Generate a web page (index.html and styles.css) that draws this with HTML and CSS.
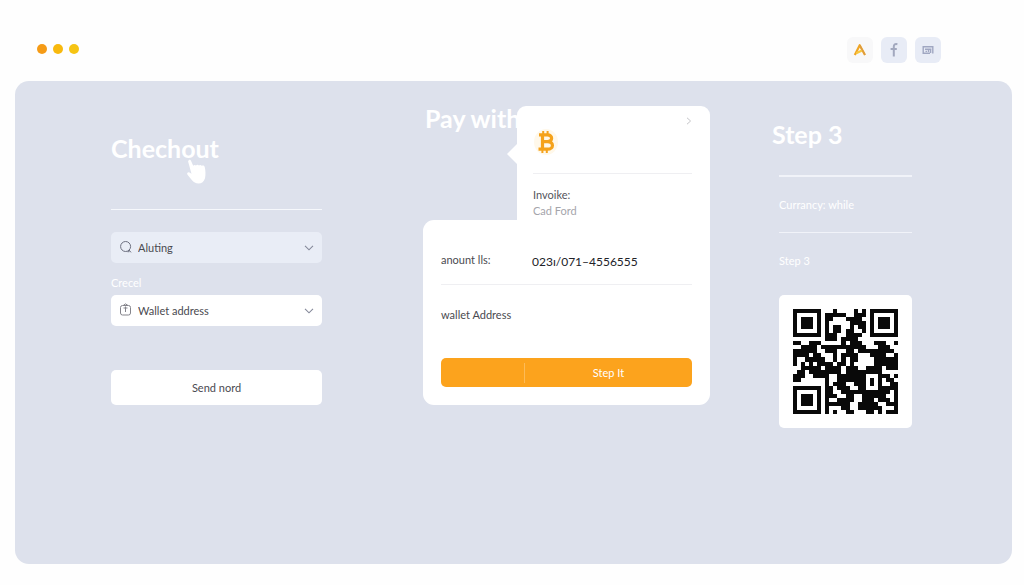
FILE: index.html
```html
<!DOCTYPE html>
<html lang="en">
<head>
<meta charset="utf-8">
<meta name="viewport" content="width=device-width, initial-scale=1">
<title>Checkout</title>
<link rel="stylesheet" href="styles.css">
</head>
<body>
<header class="topbar">
  <div class="dots" aria-hidden="true">
    <span class="dot dot-orange"></span><span class="dot dot-amber"></span><span class="dot dot-yellow"></span>
  </div>
  <nav class="tools">
    <button class="tool tool-light" type="button" aria-label="Brand">
      <svg width="14" height="14" viewBox="0 0 14 14" fill="none" stroke-linejoin="round"><path d="M1.8 12 6.7 2.2 12 12" stroke="#f0a524" stroke-width="2.2"/><path d="M3.2 10.2 9 7.5" stroke="#f7c63c" stroke-width="2.2"/><path d="M7 2.5 12 12" stroke="#d99a45" stroke-width="1.2"/></svg>
    </button>
    <button class="tool" type="button" aria-label="Facebook">
      <svg width="14" height="16" viewBox="0 0 14 16" fill="none" stroke="#a2a8be" stroke-width="2"><path d="M10.4 2.2C7.8 1.6 6.8 2.8 6.8 4.8V14.6M3.6 7H9.8"/></svg>
    </button>
    <button class="tool" type="button" aria-label="Cards">
      <svg width="12" height="10" viewBox="0 0 12 10" fill="none" stroke="#a0a7c2" stroke-width="1.4"><path d="M.5 1.8H11.5M1.2 1.5V8.2H8M10.8 1.5V8.5M3 4.2H9.4M3.5 6.4H5M6.5 4.5V7M8.6 4.5V8"/></svg>
    </button>
  </nav>
</header>
<main class="panel">
  <form class="checkout">
    <div class="checkout-head">
      <h1 class="title">Chechout</h1>
      <svg class="hand" width="22" height="26" viewBox="0 0 22 26" fill="#fff"><path d="M2.8 1.2C3.6.5 4.7.9 5.1 1.9L7.2 6.8C7.8 5.8 9.2 5.6 10 6.5 10.8 5.5 12.3 5.6 12.9 6.5 13.7 5.6 15.2 5.8 15.7 6.8 17.2 6 18.5 6.6 18.8 8.2 19.5 11.5 19.8 15.5 19 19.2 18 22.8 15.6 24.6 12.6 24.6 9.6 24.6 7.6 23.2 5.8 21L1.5 15.7C.6 14.4 1.5 13 3 13.2L5.5 14.8 2.3 3.2C2 2.3 2.1 1.7 2.8 1.2Z"/></svg>
    </div>
    <div class="field field-tint">
      <svg class="field-icon" width="14" height="14" viewBox="0 0 14 14" fill="none" stroke="#6d7080" stroke-width="1"><circle cx="6.6" cy="6.5" r="5"/><path d="M8.5 11.7H10.4M10 10 12 12.4"/></svg>
      <select class="select" aria-label="Method"><option>Aluting</option></select>
      <svg class="chevron" width="10" height="6" viewBox="0 0 10 6" fill="none" stroke="#85899a" stroke-width="1.1"><path d="M1 .8 5 4.8 9 .8"/></svg>
    </div>
    <label class="label" for="wallet">Crecel</label>
    <div class="field">
      <svg class="field-icon" width="14" height="14" viewBox="0 0 14 14" fill="none" stroke="#85858c" stroke-width="1"><rect x="1.5" y="2.5" width="10" height="9.5" rx="2"/><path d="M4.2 2.5 6.5.9 9 2.5M6.5 3.5V9M4.5 5H8.5"/></svg>
      <select class="select" id="wallet"><option>Wallet address</option></select>
      <svg class="chevron" width="10" height="6" viewBox="0 0 10 6" fill="none" stroke="#85899a" stroke-width="1.1"><path d="M1 .8 5 4.8 9 .8"/></svg>
    </div>
    <button class="send" type="button">Send nord</button>
  </form>

  <section class="payment">
    <h2 class="title pay-title">Pay with</h2>
    <div class="invoice">
      <div class="coin-row">
        <svg class="coin" width="26" height="28" viewBox="0 0 26 28"><ellipse cx="13" cy="14" rx="12" ry="13" fill="#fff8ea"/><g fill="none" stroke="#f5a21b" stroke-width="3.2"><path d="M9.5 6.5V21.5M6 6.8H14.5C20 6.8 20 13.6 14.5 13.6H10M14.5 13.6C21.2 13.6 21 21.2 14.5 21.2H5.5"/><path d="M10.2 3V7M14.6 3V7M9.4 21V25M13.8 21V25" stroke-width="2"/></g></svg>
        <button class="next" type="button" aria-label="Next"><svg width="6" height="8" viewBox="0 0 6 8" fill="none" stroke="#c4c4c8"><path d="M1 .8 4.6 4 1 7.2"/></svg></button>
      </div>
      <p class="invoice-label">Invoike:</p>
      <p class="invoice-name">Cad Ford</p>
    </div>
    <div class="details">
      <div class="amount">
        <span class="amount-label">anount lls:</span>
        <span class="amount-value">023ı/071–4556555</span>
      </div>
      <p class="wallet">wallet Address</p>
      <button class="step-button" type="button"><span class="step-text">Step It</span></button>
    </div>
  </section>

  <section class="step">
    <h2 class="title">Step 3</h2>
    <div class="step-body">
      <p class="step-row currency">Currancy: while</p>
      <p class="step-row">Step 3</p>
      <div class="qr-card"><svg class="qr" id="qr" viewBox="0 0 26 26" role="img" aria-label="Payment code"><path/></svg></div>
    </div>
  </section>
</main>
<script src="qr.js"></script>
</body>
</html>
```
FILE: styles.css
```css
* { box-sizing: border-box; }
body {
  margin: 0;
  min-height: 100vh;
  display: flex;
  flex-direction: column;
  background: #fefefe;
  color: #4a4a50;
  font: 11px/16px Lato, "Open Sans", sans-serif;
}
h1, h2, p { margin: 0; }
button, select { font: inherit; color: inherit; border: 0; padding: 0; }
svg { display: block; }

.topbar {
  display: flex;
  justify-content: space-between;
  align-items: flex-end;
  height: 81px;
  padding: 0 83px 18px 37px;
}
.dots { display: flex; gap: 6px; padding-bottom: 9px; }
.dot { width: 10px; height: 10px; border-radius: 50%; }
.dot-orange { background: #f59b16; }
.dot-amber { background: #f8b90e; }
.dot-yellow { background: #f6c413; }
.tools { display: flex; gap: 8px; }
.tool {
  display: grid;
  place-items: center;
  width: 26px;
  height: 26px;
  border-radius: 6px;
  background: #e8ecf6;
}
.tool-light { background: #f8f8f9; }

.panel {
  flex: 1;
  display: grid;
  grid-template-columns: 211fr 326fr 140fr;
  column-gap: 62px;
  align-items: start;
  margin: 0 12px 21px 15px;
  padding: 25px 100px 25px 96px;
  border-radius: 14px;
  background: #dde1ec;
}
.title {
  color: #fff;
  font: 700 25px/28px Lato, "Open Sans", sans-serif;
}

.checkout { display: flex; flex-direction: column; padding-top: 28px; }
.checkout-head {
  position: relative;
  height: 76px;
  margin-bottom: 22px;
  border-bottom: 1px solid #f6f8fc;
}
.hand { position: absolute; left: 75px; top: 25px; }
.field {
  position: relative;
  height: 31px;
  border-radius: 5px;
  background: #fff;
}
.field-tint { background: #e9edf6; }
.field-icon, .chevron { position: absolute; pointer-events: none; }
.field-icon { left: 8px; top: 8px; }
.chevron { right: 8px; top: 13px; }
.select {
  appearance: none;
  width: 100%;
  height: 100%;
  padding: 0 27px;
  border-radius: 5px;
  background: transparent;
}
.label { margin: 12px 0 4px; color: #fff; }
.send {
  height: 35px;
  margin-top: 44px;
  border-radius: 5px;
  background: #fff;
}

.payment {
  display: grid;
  grid-template-columns: 94fr 193fr;
  padding-left: 39px;
}
.pay-title { grid-area: 1 / 1 / 2 / 3; padding: 0 2px; line-height: 24px; }
.invoice {
  position: relative;
  grid-area: 1 / 2;
  height: 114px;
  padding: 0 18px 0 16px;
  border-radius: 9px 9px 0 0;
  background: #fff;
}
.invoice::before {
  content: "";
  position: absolute;
  right: 100%;
  top: 38px;
  border: 10px solid transparent;
  border-left: 0;
  border-right-color: #fff;
}
.coin-row {
  display: flex;
  justify-content: space-between;
  align-items: flex-start;
  height: 68px;
  margin-bottom: 13px;
  padding-top: 11px;
  border-bottom: 1px solid #efeff2;
}
.coin { margin-top: 11px; }
.next { background: none; }
.invoice-label { color: #55555c; }
.invoice-name { color: #a5a5ab; }
.details {
  grid-column: 1 / 3;
  padding: 24px 18px 18px;
  border-radius: 11px 0 11px 11px;
  background: #fff;
}
.amount {
  display: grid;
  grid-template-columns: 91fr 160fr;
  height: 41px;
  padding-top: 8px;
  border-bottom: 1px solid #efeff2;
}
.amount-value { font-size: 12px; line-height: 20px; color: #222228; }
.wallet { padding: 22px 0 35px; }
.step-button {
  display: grid;
  grid-template-columns: 83fr 168fr;
  align-items: center;
  width: 100%;
  height: 29px;
  border-radius: 5px;
  background: #fca31d;
  color: #fff;
}
.step-text { grid-column: 2; line-height: 20px; border-left: 1px solid #fdbb57; }

.step { padding-top: 14px; }
.step-body { padding: 27px 0 0 7px; }
.step-row { height: 57px; padding-top: 20px; border-top: 1px solid #f1f3f9; color: #fff; }
.currency { border-top-width: 2px; }
.step-row:nth-child(2) { height: 63px; }
.qr-card { padding: 14px; border-radius: 5px; background: #fff; }
.qr { width: 100%; fill: #090909; shape-rendering: crispEdges; }
```
FILE: qr.js
```js
const rows = [
  "11111110001000010101111111",
  "10000010111110011101000001",
  "10111010110001111001011101",
  "10111010100000111101011101",
  "10111010101100101101011101",
  "10000010101101100101000001",
  "11111110111001111001111111",
  "00000000111011110000000000",
  "11001110000010111000111001",
  "00111101111111111100011100",
  "11111100111001101111111110",
  "11110110001011110001111001",
  "10011111001010110000111111",
  "10101011110110100000111111",
  "00111110111101110011110111",
  "01101111111101111111110000",
  "11100111100111111100011101",
  "11000000100111111101010110",
  "00000000101110011101010011",
  "11111110110111001100011111",
  "10000010110011111111111101",
  "10111010111001100111111001",
  "10111010100111100111011101",
  "10111010111111001111100111",
  "10000010100011001111110001",
  "11111110101001100011010111"
];
let path = "";
rows.forEach((row, y) => {
  for (const run of row.matchAll(/1+/g)) {
    path += `M${run.index} ${y}h${run[0].length}v1h-${run[0].length}z`;
  }
});
document.querySelector("#qr path").setAttribute("d", path);
```
